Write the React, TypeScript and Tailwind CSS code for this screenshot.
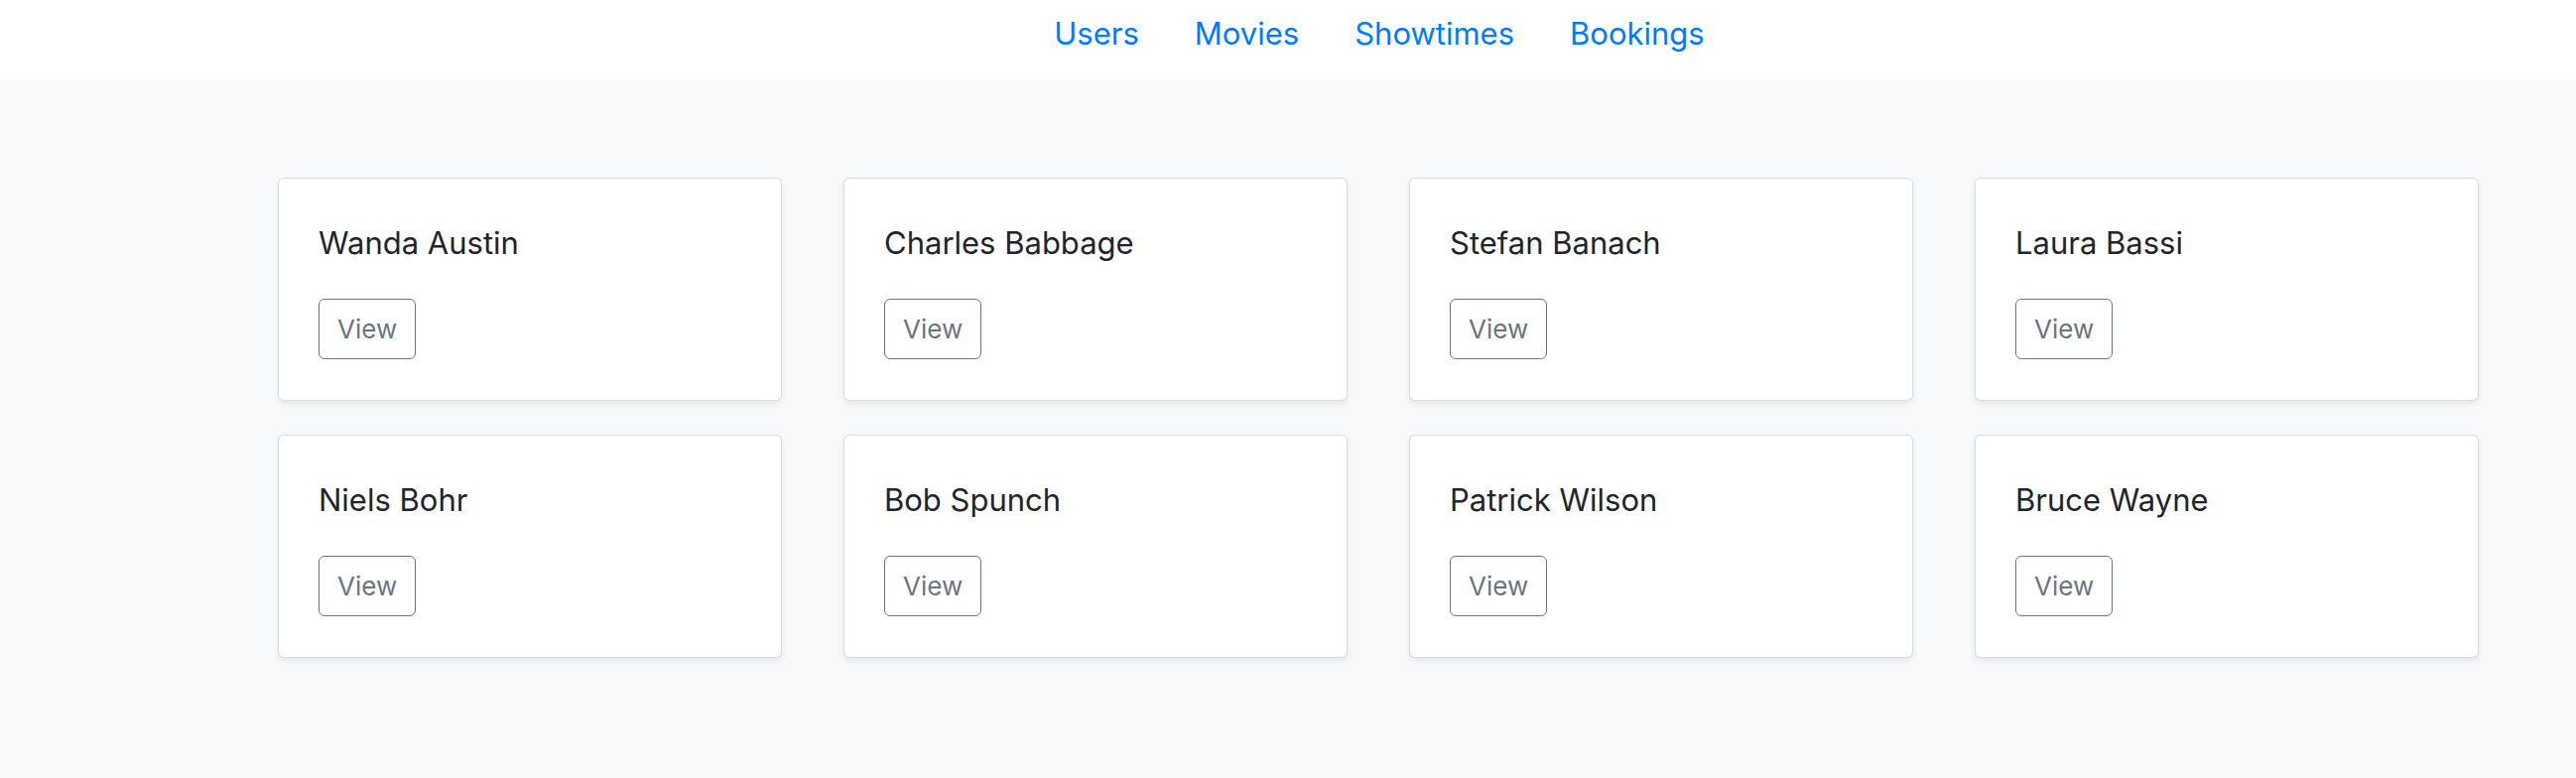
import React from "react";

const names = [
  "Wanda Austin",
  "Charles Babbage",
  "Stefan Banach",
  "Laura Bassi",
  "Niels Bohr",
  "Bob Spunch",
  "Patrick Wilson",
  "Bruce Wayne",
];

const links = ["Users", "Movies", "Showtimes", "Bookings"];

export default function App() {
  return (
    <div
      className="min-h-screen bg-[#f8f9fa]"
      style={{ fontFamily: "Inter, 'Liberation Sans', sans-serif" }}
    >
      <nav className="h-[80px] bg-white flex justify-center items-center pl-[184px]">
        <ul className="flex gap-[56px] pb-[12px]">
          {links.map((l) => (
            <li key={l}>
              <a className="text-[31px] leading-[38px] text-[#007bff]" href="#">
                {l}
              </a>
            </li>
          ))}
        </ul>
      </nav>
      <main className="pt-[99px] pl-[280px]">
        <div className="grid grid-cols-[repeat(4,508px)] gap-x-[62px] gap-y-[34px]">
          {names.map((n) => (
            <div
              key={n}
              className="h-[225px] bg-white border-[1.6px] border-[rgba(0,0,0,0.14)] rounded-[6px] shadow-[0_3px_6px_rgba(0,0,0,0.08)] pl-[40px] pr-[39px] pt-[46px]"
            >
              <h5 className="text-[31px] leading-[38px] text-[#212529] font-normal">{n}</h5>
              <button className="mt-[37px] h-[61px] px-[18px] border-[1.6px] border-[#6c757d] rounded-[6px] text-[#6c757d] text-[26px] leading-[38px]">
                View
              </button>
            </div>
          ))}
        </div>
      </main>
    </div>
  );
}
